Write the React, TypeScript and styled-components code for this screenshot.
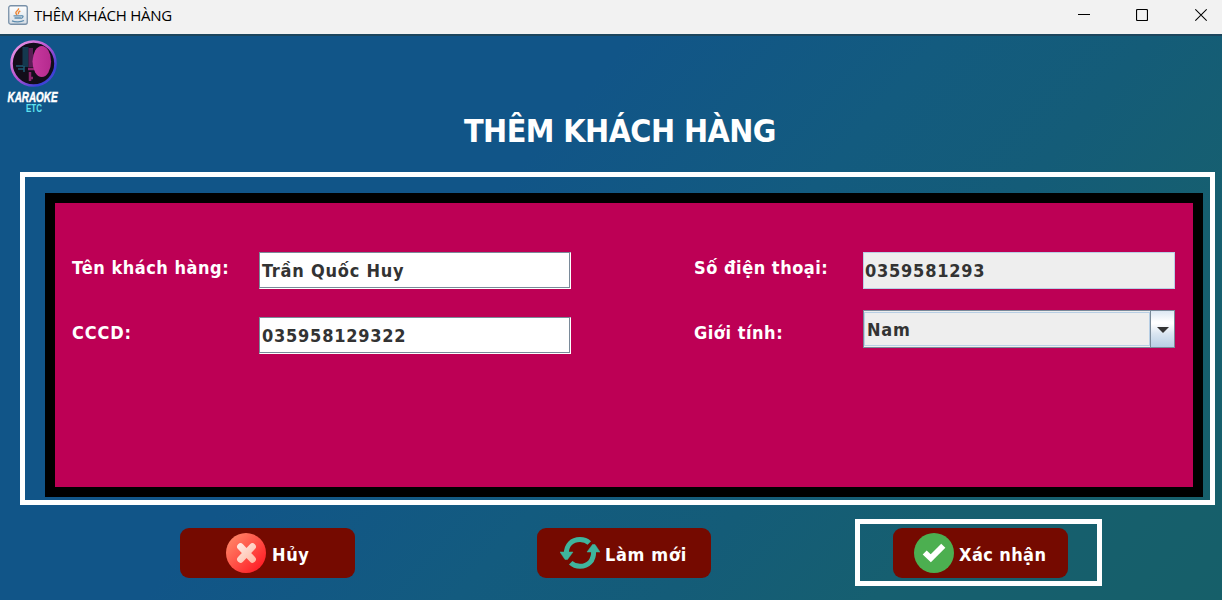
import React from 'react';
import styled, { createGlobalStyle } from 'styled-components';

const Global = createGlobalStyle`
  *, *::before, *::after { box-sizing: border-box; }
  body { margin: 0; font-family: "DejaVu Sans Condensed", "DejaVu Sans", sans-serif; }
`;

const Window = styled.div`
  width: 1222px;
  height: 600px;
  display: flex;
  flex-direction: column;
  overflow: hidden;
  background: linear-gradient(131deg, #115588 0%, #115588 38%, #135b7f 56%, #145c78 68%, #165f70 80%, #165f69 100%);
`;

const TitleBar = styled.header`
  display: flex;
  align-items: flex-start;
  height: 36px;
  flex: none;
  padding: 5px 15px 0 8px;
  background: #f2f2f2;
  border-bottom: 2px solid #1d465d;
`;

const Caption = styled.span`
  margin-left: 6px;
  font-family: "Open Sans", sans-serif;
  font-size: 15px;
  line-height: 21px;
  letter-spacing: -0.27px;
  color: #000;
`;

const WindowControls = styled.div`
  display: flex;
  gap: 46px;
  margin-left: auto;
  padding-top: 3px;
  svg:last-child { margin-left: 1px; }
`;

const Body = styled.main`
  display: flex;
  flex-direction: column;
  flex: 1;
`;

const Brand = styled.div`
  height: 76px;
  padding: 4px 0 0 4px;
`;

const Heading = styled.h1`
  margin: 0;
  padding-left: 464px;
  height: 60px;
  font-size: 32px;
  line-height: 38px;
  font-weight: bold;
  letter-spacing: -0.55px;
  color: #fff;
  white-space: nowrap;
`;

const Frame = styled.section`
  width: 1195px;
  height: 333px;
  margin-left: 20px;
  padding: 16px 7px 3px 20px;
  border: 5px solid #fff;
`;

const Panel = styled.form`
  display: flex;
  height: 304px;
  padding: 49px 18px 0 17px;
  border: 10px solid #000;
  background: #bd0055;
`;

const Column = styled.div<{ $width: number; $gap?: number; $after?: number }>`
  display: flex;
  flex-direction: column;
  flex: none;
  width: ${p => p.$width}px;
  gap: ${p => p.$gap ?? 28}px;
  margin-right: ${p => p.$after ?? 0}px;
`;

const Label = styled.label<{ $spacing?: number }>`
  height: 37px;
  font-size: 18px;
  line-height: 31px;
  font-weight: bold;
  letter-spacing: ${p => p.$spacing ?? 0.52}px;
  color: #fff;
  white-space: nowrap;
`;

const Field = styled.div<{ $disabled?: boolean }>`
  height: 37px;
  padding-left: ${p => (p.$disabled ? 1 : 2)}px;
  border: 1px solid ${p => (p.$disabled ? '#b8cfe5' : '#7a8a99')};
  border-right-color: ${p => (p.$disabled ? '#b8cfe5' : '#fff')};
  border-bottom-color: ${p => (p.$disabled ? '#b8cfe5' : '#fff')};
  box-shadow: ${p => (p.$disabled ? 'none' : 'inset -1px -1px 0 #7a8a99')};
  background: ${p => (p.$disabled ? '#eee' : '#fff')};
  font-size: 18px;
  line-height: 35px;
  font-weight: bold;
  letter-spacing: 0.76px;
  color: #333;
  white-space: nowrap;
`;

const Combo = styled.div`
  display: flex;
  height: 38px;
  border: 1px solid #7a8a99;
  background: #eee;
`;

const ComboValue = styled.div`
  flex: 1;
  margin: 1px 0 1px 0;
  padding-left: 2px;
  border: 1px solid #b8cfe5;
  font-size: 18px;
  line-height: 33px;
  font-weight: bold;
  letter-spacing: 0.7px;
  color: #333;
`;

const ComboArrow = styled.div`
  display: flex;
  align-items: center;
  justify-content: center;
  width: 24px;
  padding-top: 2px;
  border-left: 1px solid #7a8a99;
  background: linear-gradient(#dde8f3 0%, #fff 30%, #fff 35%, #dbe6f1 62%, #b8cfe5 100%);
`;

const Actions = styled.footer`
  display: flex;
  align-items: flex-start;
  padding: 14px 0 0 180px;
`;

const Slot = styled.div<{ $after: number }>`
  padding-top: 9px;
  margin-right: ${p => p.$after}px;
`;

const Highlight = styled.div`
  width: 247px;
  height: 67px;
  padding: 4px 0 0 33px;
  border: 5px solid #fff;
`;

const ActionButton = styled.button<{ $inset: number; $gap: number; $spacing: number }>`
  display: flex;
  align-items: center;
  gap: ${p => p.$gap}px;
  width: 174.5px;
  height: 50px;
  padding: 0 0 0 ${p => p.$inset}px;
  border: 0;
  border-radius: 9px;
  background: #750a00;
  color: #fff;
  font: bold 18px/21px "DejaVu Sans Condensed", "DejaVu Sans", sans-serif;
  letter-spacing: ${p => p.$spacing}px;
  white-space: nowrap;
  svg { flex: none; }
  span { padding-top: 2px; }
`;

const JavaIcon = () => (
  <svg width="20" height="20" viewBox="0 0 20 20">
    <defs>
      <linearGradient id="java" x1="0" y1="0" x2="0" y2="1">
        <stop offset="0" stopColor="#fff" />
        <stop offset="1" stopColor="#d5dde5" />
      </linearGradient>
    </defs>
    <rect x=".75" y=".75" width="18.5" height="18.5" rx="2" fill="url(#java)" stroke="#7890a8" strokeWidth="1.3" />
    <path d="M10.5 3.2c1 2-3.6 3-2.6 5 .4.9 1 1.3 1 2M12.3 6c-2 1-2.4 2-1.5 3.2" fill="none" stroke="#ee8432" strokeWidth="1.4" />
    <path d="M5.5 10.8h8M6.5 13h6.4M13.5 10.6c2.6 0 1.5 2.4-.6 2.7M4 15.8c3 1.4 9 1.3 12-.3" fill="none" stroke="#5d8cae" strokeWidth="1.3" />
  </svg>
);

const Logo = () => (
  <svg width="62" height="74" viewBox="4 40 62 74">
    <defs>
      <linearGradient id="ring" x1="0" y1="0" x2="1" y2="1">
        <stop offset="0" stopColor="#f3a0e6" />
        <stop offset=".5" stopColor="#b44fd0" />
        <stop offset=".8" stopColor="#3540d8" />
        <stop offset="1" stopColor="#6a48d0" />
      </linearGradient>
      <linearGradient id="mic" x1="0" y1="0" x2="1" y2="0">
        <stop offset="0" stopColor="#c8399f" />
        <stop offset="1" stopColor="#b52a8e" />
      </linearGradient>
    </defs>
    <circle cx="33.5" cy="63.5" r="22" fill="#120d1a" stroke="url(#ring)" strokeWidth="2.6" />
    <rect x="22.5" y="47" width="6" height="20" fill="#14384e" />
    <rect x="28.5" y="48" width="4.5" height="19" fill="#5b1c55" />
    <path d="M16 66h7M18 69h6M24 66v6" stroke="#1c5a73" strokeWidth="1.5" />
    <path d="M28 69h7M30 72v9M29 78h4" stroke="#8c256f" strokeWidth="2.5" />
    <ellipse cx="41.8" cy="61.5" rx="9.3" ry="15.4" fill="url(#mic)" />
    <text x="7.5" y="101.5" textLength="50" lengthAdjust="spacingAndGlyphs" fontFamily="Liberation Sans" fontSize="15" fontWeight="bold" fontStyle="italic" fill="#fff" stroke="#fff" strokeWidth=".5">KARAOKE</text>
    <text x="26" y="111.7" textLength="16" lengthAdjust="spacingAndGlyphs" fontFamily="Liberation Sans" fontSize="10" fontWeight="bold" fill="#5fe3f0">ETC</text>
  </svg>
);

const CancelIcon = () => (
  <svg width="40" height="40" viewBox="0 0 40 40">
    <defs>
      <linearGradient id="red" x1="0" y1="0" x2="1" y2="1">
        <stop offset=".15" stopColor="#ff7f63" />
        <stop offset=".85" stopColor="#ff2229" />
      </linearGradient>
      <linearGradient id="cross" gradientUnits="userSpaceOnUse" x1="12" y1="11" x2="29" y2="29">
        <stop offset="0" stopColor="#ffe9e2" />
        <stop offset="1" stopColor="#ffb9a4" />
      </linearGradient>
    </defs>
    <circle cx="20" cy="20" r="20" fill="url(#red)" />
    <path d="M14.5 13.7 26.5 26.3M26.5 13.7 14.5 26.3" stroke="url(#cross)" strokeWidth="6.8" strokeLinecap="round" />
  </svg>
);

const RefreshIcon = () => (
  <svg width="40" height="34" viewBox="0 0 40 34">
    <g fill="none" stroke="#3fb59d" strokeWidth="5">
      <path d="M6.4 18C6 9 12 3.5 20 3.5c3.800 0 6.800 1.100 9.300 3.500" />
      <path d="M33.600 15C34 25 28 30.300 20 30.300c-3.800 0-6.800-1.100-9.300-3.500" />
    </g>
    <path d="M0 16h13L7.500 23.500h-2.500zM40 16H27L32.500 8.500h2.500z" fill="#3fb59d" stroke="#3fb59d" strokeWidth=".5" />
  </svg>
);

const CheckIcon = () => (
  <svg width="40" height="40" viewBox="0 0 40 40">
    <circle cx="20" cy="20" r="20" fill="#4caf50" />
    <path d="M10.700 19.500 16.800 25.300 29.300 12.700" fill="none" stroke="#fff" strokeWidth="5.800" />
  </svg>
);

export default function App() {
  return (
    <Window>
      <Global />
      <TitleBar>
        <JavaIcon />
        <Caption>THÊM KHÁCH HÀNG</Caption>
        <WindowControls>
          <svg width="12" height="14"><path d="M0 6.5h12" stroke="#000" /></svg>
          <svg width="12" height="14"><rect x=".5" y="1.5" width="11" height="11" rx="1" fill="none" stroke="#000" strokeWidth="1.2" /></svg>
          <svg width="12" height="14"><path d="M.3 1.300 11.700 12.700M11.700 1.300.3 12.700" stroke="#000" strokeWidth="1.2" /></svg>
        </WindowControls>
      </TitleBar>
      <Body>
        <Brand><Logo /></Brand>
        <Heading>THÊM KHÁCH HÀNG</Heading>
        <Frame>
          <Panel>
            <Column $width={187}>
              <Label>Tên khách hàng:</Label>
              <Label $spacing={0.85}>CCCD:</Label>
            </Column>
            <Column $width={312} $after={123}>
              <Field>Trần Quốc Huy</Field>
              <Field>035958129322</Field>
            </Column>
            <Column $width={169}>
              <Label>Số điện thoại:</Label>
              <Label>Giới tính:</Label>
            </Column>
            <Column $width={312} $gap={21}>
              <Field $disabled>0359581293</Field>
              <Combo>
                <ComboValue>Nam</ComboValue>
                <ComboArrow>
                  <svg width="12" height="6"><path d="M0 0h12L6 6z" fill="#333" /></svg>
                </ComboArrow>
              </Combo>
            </Column>
          </Panel>
        </Frame>
        <Actions>
          <Slot $after={182}>
            <ActionButton type="button" $inset={46} $gap={6} $spacing={0.6}><CancelIcon /><span>Hủy</span></ActionButton>
          </Slot>
          <Slot $after={144}>
            <ActionButton type="button" $inset={23.5} $gap={5} $spacing={0.65}><RefreshIcon /><span>Làm mới</span></ActionButton>
          </Slot>
          <Highlight>
            <ActionButton type="button" $inset={21} $gap={5} $spacing={0.4}><CheckIcon /><span>Xác nhận</span></ActionButton>
          </Highlight>
        </Actions>
      </Body>
    </Window>
  );
}
